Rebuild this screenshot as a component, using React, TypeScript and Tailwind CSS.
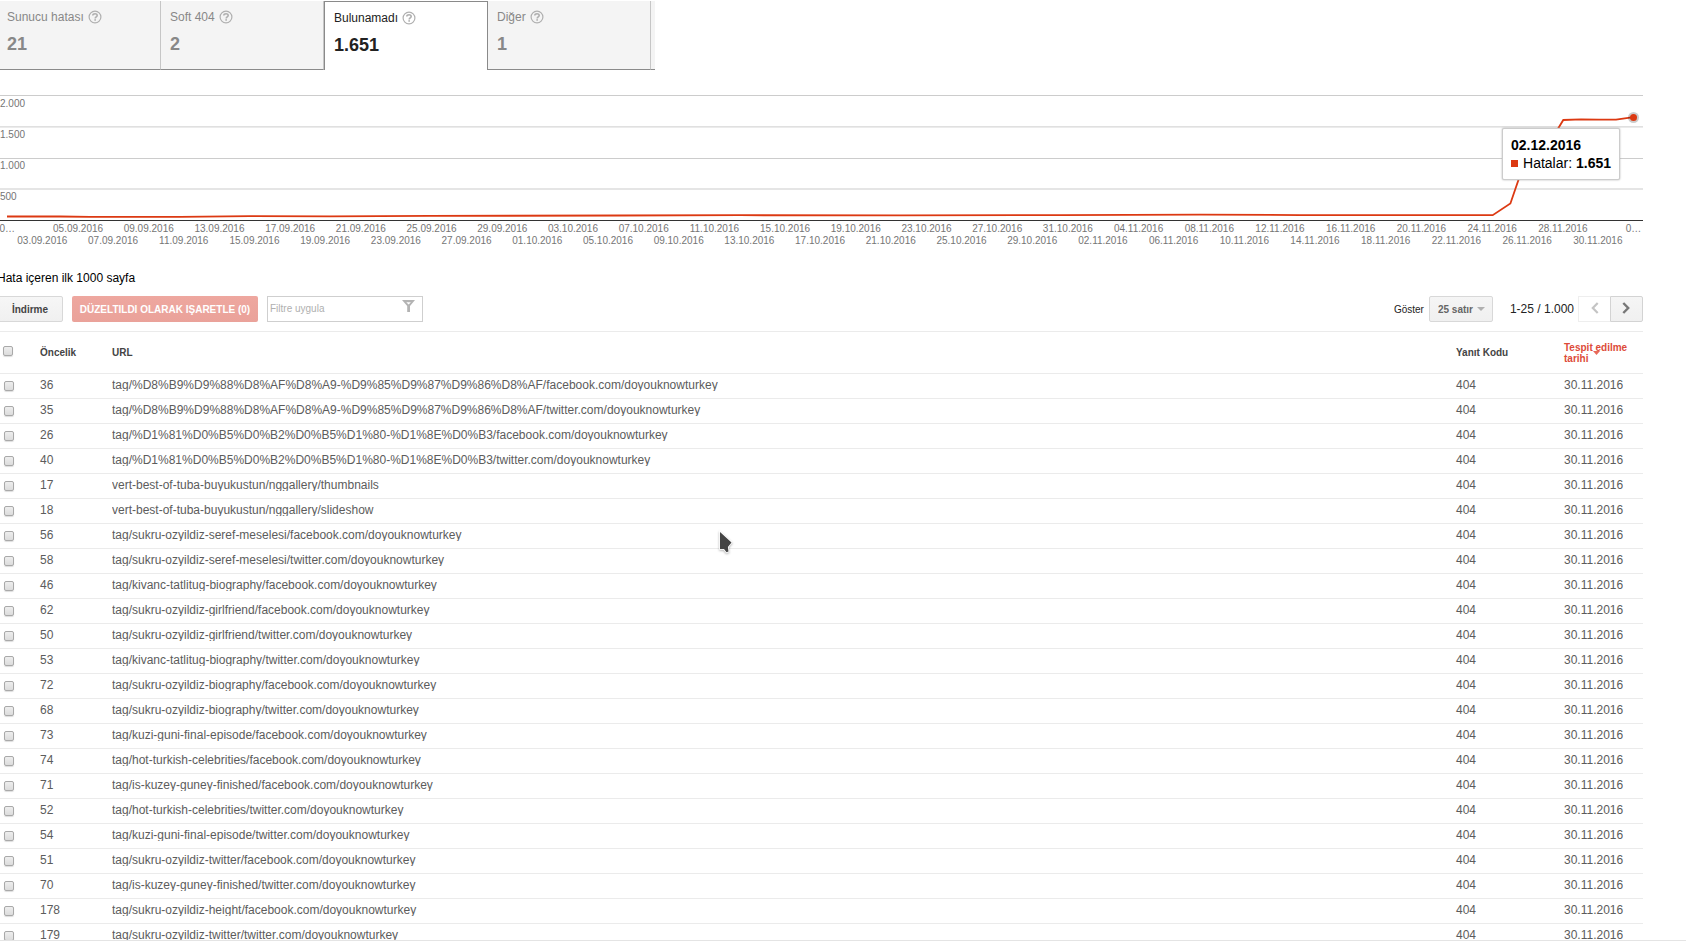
import React from "react";

const tabs = [
  { label: "Sunucu hatası", count: "21", active: false },
  { label: "Soft 404", count: "2", active: false },
  { label: "Bulunamadı", count: "1.651", active: true },
  { label: "Diğer", count: "1", active: false },
];

const rows: [string, string][] = [
  ["36", "tag/%D8%B9%D9%88%D8%AF%D8%A9-%D9%85%D9%87%D9%86%D8%AF/facebook.com/doyouknowturkey"],
  ["35", "tag/%D8%B9%D9%88%D8%AF%D8%A9-%D9%85%D9%87%D9%86%D8%AF/twitter.com/doyouknowturkey"],
  ["26", "tag/%D1%81%D0%B5%D0%B2%D0%B5%D1%80-%D1%8E%D0%B3/facebook.com/doyouknowturkey"],
  ["40", "tag/%D1%81%D0%B5%D0%B2%D0%B5%D1%80-%D1%8E%D0%B3/twitter.com/doyouknowturkey"],
  ["17", "vert-best-of-tuba-buyukustun/nggallery/thumbnails"],
  ["18", "vert-best-of-tuba-buyukustun/nggallery/slideshow"],
  ["56", "tag/sukru-ozyildiz-seref-meselesi/facebook.com/doyouknowturkey"],
  ["58", "tag/sukru-ozyildiz-seref-meselesi/twitter.com/doyouknowturkey"],
  ["46", "tag/kivanc-tatlitug-biography/facebook.com/doyouknowturkey"],
  ["62", "tag/sukru-ozyildiz-girlfriend/facebook.com/doyouknowturkey"],
  ["50", "tag/sukru-ozyildiz-girlfriend/twitter.com/doyouknowturkey"],
  ["53", "tag/kivanc-tatlitug-biography/twitter.com/doyouknowturkey"],
  ["72", "tag/sukru-ozyildiz-biography/facebook.com/doyouknowturkey"],
  ["68", "tag/sukru-ozyildiz-biography/twitter.com/doyouknowturkey"],
  ["73", "tag/kuzi-guni-final-episode/facebook.com/doyouknowturkey"],
  ["74", "tag/hot-turkish-celebrities/facebook.com/doyouknowturkey"],
  ["71", "tag/is-kuzey-guney-finished/facebook.com/doyouknowturkey"],
  ["52", "tag/hot-turkish-celebrities/twitter.com/doyouknowturkey"],
  ["54", "tag/kuzi-guni-final-episode/twitter.com/doyouknowturkey"],
  ["51", "tag/sukru-ozyildiz-twitter/facebook.com/doyouknowturkey"],
  ["70", "tag/is-kuzey-guney-finished/twitter.com/doyouknowturkey"],
  ["178", "tag/sukru-ozyildiz-height/facebook.com/doyouknowturkey"],
  ["179", "tag/sukru-ozyildiz-twitter/twitter.com/doyouknowturkey"],
];

const upperDates = [
  "0…", "05.09.2016", "09.09.2016", "13.09.2016", "17.09.2016", "21.09.2016", "25.09.2016", "29.09.2016",
  "03.10.2016", "07.10.2016", "11.10.2016", "15.10.2016", "19.10.2016", "23.10.2016", "27.10.2016", "31.10.2016",
  "04.11.2016", "08.11.2016", "12.11.2016", "16.11.2016", "20.11.2016", "24.11.2016", "28.11.2016", "0…",
];

const lowerDates = [
  "03.09.2016", "07.09.2016", "11.09.2016", "15.09.2016", "19.09.2016", "23.09.2016", "27.09.2016", "01.10.2016",
  "05.10.2016", "09.10.2016", "13.10.2016", "17.10.2016", "21.10.2016", "25.10.2016", "29.10.2016", "02.11.2016",
  "06.11.2016", "10.11.2016", "14.11.2016", "18.11.2016", "22.11.2016", "26.11.2016", "30.11.2016",
];

const yLabels = ["2.000", "1.500", "1.000", "500"];

function HelpIcon() {
  return (
    <svg width="14" height="14" viewBox="0 0 14 14" fill="none" aria-hidden="true">
      <circle cx="7" cy="7" r="5.9" stroke="#b0b0b0" strokeWidth="1.2" />
      <path
        d="M4.8 5.6C4.8 4.4 5.8 3.8 7 3.8s2.2.6 2.2 1.7c0 1.3-2 1.5-2 2.9"
        stroke="#b0b0b0"
        strokeWidth="1.6"
      />
      <rect x="6.3" y="9.2" width="1.7" height="1.5" fill="#b0b0b0" />
    </svg>
  );
}

function Tab({ label, count, active }: { label: string; count: string; active: boolean }) {
  return (
    <button
      type="button"
      role="tab"
      aria-selected={active}
      className={
        active
          ? "flex w-[164px] flex-col items-start border-x border-t border-[#8a8a8a] bg-white px-[9px] pt-2 text-[#222]"
          : "flex w-[163px] flex-col items-start border-r border-b border-r-[#c6c6c6] border-b-[#8a8a8a] bg-[#f4f4f4] px-[9px] pt-2 text-[#888] first:w-[161px] first:pl-[7px]"
      }
    >
      <span className="flex items-center gap-1 text-[12px] leading-4">
        {label}
        <HelpIcon />
      </span>
      <span className="mt-2 text-[18px] leading-[22px] font-bold">{count}</span>
    </button>
  );
}

function Check({ label }: { label: string }) {
  return (
    <input
      type="checkbox"
      aria-label={label}
      className="block size-[10px] appearance-none rounded-[2px] border border-[#a9a9a9] bg-linear-to-b from-[#eeeeee] to-[#dcdcdc] shadow-[0_1px_1px_#ddd]"
    />
  );
}

function Chart() {
  return (
    <section aria-label="Hatalar" className="relative mt-[25px] mr-[43px]">
      <div className="relative h-[126px]">
        <svg
          className="absolute inset-0 h-full w-full overflow-visible"
          viewBox="0 0 1643 126"
          preserveAspectRatio="none"
          aria-hidden="true"
        >
          <g fill="#cccccc">
            <rect width="1643" y="0" height="1" />
            <rect width="1643" y="31.4" height="1" />
            <rect width="1643" y="63" height="1" />
            <rect width="1643" y="93.5" height="1" />
          </g>
          <rect width="1643" y="125" height="1" fill="#333333" />
          <polyline
            points="7,121.5 60,121.5 90,121.8 180,121.8 250,121.1 330,121.4 430,120.9 620,120.5 740,120.2 900,120.4 1060,120.1 1200,119.6 1300,120.1 1492.7,120.2 1510.4,108.5 1528,57 1545.7,54 1563.3,25 1581,24.3 1599,24.7 1616,24.6 1633.5,22.2"
            fill="none"
            stroke="#dc3912"
            strokeWidth="1.8"
          />
        </svg>
        <div className="flex flex-col pt-px text-[10px] text-[#757575]">
          {yLabels.map((l) => (
            <span key={l} className="h-[31px] pt-[2px] leading-3">
              {l}
            </span>
          ))}
        </div>
        <div className="absolute top-[17px] right-1 size-[11px] rounded-full bg-black/20 p-[2px]">
          <div className="size-[7px] rounded-full bg-[#dc3912]" />
        </div>
        <div className="absolute top-[33px] right-[23px] rounded-[2px] border border-[#cccccc] bg-white px-2 py-[7px] text-[14px] leading-[18px] whitespace-nowrap text-black shadow-[0_0_2px_#aaaaaa]">
          <div className="font-bold">02.12.2016</div>
          <div className="flex items-center">
            <span className="mr-[5px] size-[7px] bg-[#dc3912]" />
            <span>
              Hatalar: <b>1.651</b>
            </span>
          </div>
        </div>
      </div>
      <div className="-mr-[26px] -ml-[28px] flex pt-[2px] text-[10px] leading-3 text-[#757575]">
        {upperDates.map((d, i) => (
          <span key={i} className="min-w-0 flex-1 text-center">
            {d}
          </span>
        ))}
      </div>
      <div className="flex pr-[10px] pl-[7px] text-[10px] leading-3 text-[#757575]">
        {lowerDates.map((d) => (
          <span key={d} className="min-w-0 flex-1 text-center">
            {d}
          </span>
        ))}
      </div>
    </section>
  );
}

function Toolbar() {
  return (
    <div className="mt-[10px] mr-[43px] flex h-[26px] items-stretch text-[10px]">
      <button
        type="button"
        className="-ml-[3px] w-[66px] rounded-[2px] border border-[#d8d8d8] bg-linear-to-b from-[#f6f6f6] to-[#f0f0f0] font-bold text-[#444]"
      >
        İndirme
      </button>
      <button
        type="button"
        className="ml-[9px] w-[186px] rounded-[2px] bg-linear-to-b from-[#eea79f] to-[#eaa29a] font-bold whitespace-nowrap text-white"
      >
        DÜZELTILDI OLARAK IŞARETLE (0)
      </button>
      <div className="relative ml-[9px] w-[156px]">
        <input
          type="text"
          aria-label="Filtre uygula"
          placeholder="Filtre uygula"
          className="h-full w-full border border-[#cfcfcf] bg-white pr-6 pb-px pl-[2px] outline-none placeholder:text-[#b0b0b0]"
        />
        <svg className="absolute top-1 right-2" width="13" height="13" viewBox="0 0 13 13" aria-hidden="true">
          <path fillRule="evenodd" d="M0 0h13L8 6v6H5.2V6zM4.3 2.2l2.3 2.3 2.3-2.3z" fill="#b3b3b3" />
        </svg>
      </div>
      <div className="ml-auto flex items-stretch">
        <label htmlFor="page-size" className="mr-[5px] self-center text-[#222]">
          Göster
        </label>
        <div className="relative w-16">
          <select
            id="page-size"
            className="h-full w-full appearance-none rounded-[2px] border border-[#d8d8d8] bg-linear-to-b from-[#f5f5f5] to-[#f0f0f0] pl-2 font-bold text-[#666]"
          >
            <option>25 satır</option>
          </select>
          <svg className="absolute top-[11px] right-2" width="8" height="4" viewBox="0 0 8 4" aria-hidden="true">
            <path d="M0 0h8L4 4z" fill="#b0b0b0" />
          </svg>
        </div>
        <span className="ml-[17px] self-center text-[12px] text-[#222]">1-25 / 1.000</span>
        <button
          type="button"
          aria-label="Önceki"
          className="ml-1 flex w-8 items-center justify-center border border-r-0 border-[#eeeeee] bg-white pb-[2px]"
        >
          <svg width="8" height="12" viewBox="0 0 8 12" fill="none" aria-hidden="true">
            <path d="M6.7 1 1.8 6l4.9 5" stroke="#c4c4c4" strokeWidth="2.2" />
          </svg>
        </button>
        <button
          type="button"
          aria-label="Sonraki"
          className="flex w-[33px] items-center justify-center rounded-r-[2px] border border-[#d3d3d3] bg-linear-to-b from-[#f5f5f5] to-[#f0f0f0] pr-[2px] pb-[2px]"
        >
          <svg width="8" height="12" viewBox="0 0 8 12" fill="none" aria-hidden="true">
            <path d="M1.3 1 6.2 6l-4.9 5" stroke="#777777" strokeWidth="2.4" />
          </svg>
        </button>
      </div>
    </div>
  );
}

function ErrorTable() {
  return (
    <div className="mt-[9px] mr-[43px] border-t border-[#ebebeb]">
      <table className="w-full table-fixed border-collapse text-left">
        <colgroup>
          <col className="w-10" />
          <col className="w-[72px]" />
          <col />
          <col className="w-[108px]" />
          <col className="w-[79px]" />
        </colgroup>
        <thead>
          <tr className="h-[41px] border-b border-[#ebebeb] text-[10px] leading-[11px] text-[#444]">
            <th className="pb-[3px] pl-[3px]">
              <Check label="Tümünü seç" />
            </th>
            <th>Öncelik</th>
            <th>URL</th>
            <th>Yanıt Kodu</th>
            <th className="pt-[2px] text-[#dd4b39]">
              <span className="relative block">
                Tespit edilme
                <br />
                tarihi
                <svg className="absolute top-[9px] left-[29px]" width="7" height="4" viewBox="0 0 7 4" aria-hidden="true">
                  <path d="M0 0h7L3.5 4z" fill="#e8695a" />
                </svg>
              </span>
            </th>
          </tr>
        </thead>
        <tbody className="text-[12px] leading-3 text-[#5c5c5c]">
          {rows.map(([priority, url]) => (
            <tr key={priority} className="h-[25px] border-b border-[#ebebeb]">
              <td className="pt-px pl-1">
                <Check label={url} />
              </td>
              <td className="pb-[2px]">{priority}</td>
              <td className="pb-[2px]">
                <span className="block overflow-hidden whitespace-nowrap">{url}</span>
              </td>
              <td className="pb-[2px]">404</td>
              <td className="pb-[2px]">30.11.2016</td>
            </tr>
          ))}
        </tbody>
      </table>
    </div>
  );
}

export default function App() {
  return (
    <main className="relative h-screen overflow-hidden border-b border-[#e4e4e4] bg-white pt-px font-['Liberation_Sans',Arial,sans-serif] text-black">
      <div role="tablist" className="flex h-[69px]">
        {tabs.map((t) => (
          <Tab key={t.label} {...t} />
        ))}
        <div className="w-1 border-b border-[#8a8a8a] bg-[#f4f4f4]" />
      </div>
      <Chart />
      <h2 className="mt-[23px] -ml-[3px] text-[12px] leading-4">Hata içeren ilk 1000 sayfa</h2>
      <Toolbar />
      <ErrorTable />
      <svg
        className="absolute top-[530px] left-[718px] drop-shadow-[0_1px_1px_rgba(0,0,0,0.3)]"
        width="16"
        height="24"
        viewBox="0 0 16 24"
        aria-hidden="true"
      >
        <path
          d="M2 2v17h4l2.5 3.2 2-.8-.6-4.4 3.6-4.6z"
          fill="#444444"
          stroke="#ffffff"
          strokeWidth="1.6"
          paintOrder="stroke"
        />
      </svg>
    </main>
  );
}
